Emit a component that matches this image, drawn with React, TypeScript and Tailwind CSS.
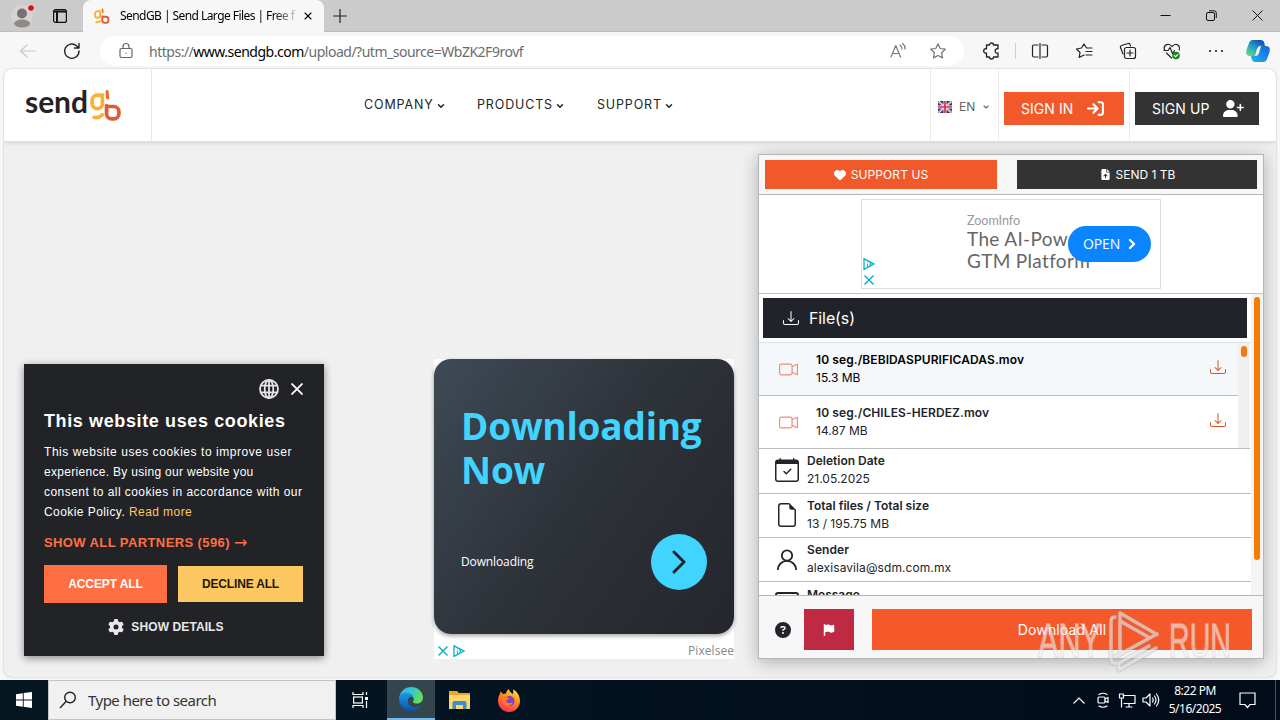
import type { ReactNode } from "react"
import { BsCalendarCheck, BsCameraVideo, BsDownload, BsFileEarmark } from "react-icons/bs"
import { FaArrowRightToBracket, FaCircleQuestion, FaFileArrowUp, FaFlag, FaGear, FaHeart, FaUserPlus } from "react-icons/fa6"
import { ChevronDown, ChevronRight, X } from "lucide-react"

const files = [
  { name: "10 seg./BEBIDASPURIFICADAS.mov", size: "15.3 MB", row: "h-[53px] bg-[#f5f8fb] text-black", spacing: "tracking-[0.090px]" },
  { name: "10 seg./CHILES-HERDEZ.mov", size: "14.87 MB", row: "h-[53px] bg-white text-[#212529]", spacing: "tracking-[0.100px]" },
]

function Line({ children, className = "" }: { children: ReactNode; className?: string }) {
  return (
    <svg viewBox="0 0 20 20" fill="none" stroke="currentColor" strokeWidth="1.2" strokeLinecap="round" strokeLinejoin="round" className={`h-5 w-5 shrink-0 ${className}`}>
      {children}
    </svg>
  )
}

function AdMarks({ vertical = false }: { vertical?: boolean }) {
  const play = (
    <svg viewBox="0 0 12 12" className="h-3 w-3" fill="none" stroke="#00aecd" strokeWidth="1.3">
      <path d="M1 .8v10.6L11.3 6z" />
      <path d="M4.400 5.500v3.500M4.400 3.300v1M6 4.500L8.400 6 6 7.500" strokeWidth="1" />
    </svg>
  )
  const close = (
    <svg viewBox="0 0 12 12" className="h-3 w-3" fill="none" stroke="#00aecd" strokeWidth="1.4">
      <path d="M1.500 1.500l9 9M10.500 1.500l-9 9" />
    </svg>
  )
  return vertical ? (
    <div className="flex flex-col gap-1">{play}{close}</div>
  ) : (
    <div className="flex gap-1">{close}{play}</div>
  )
}

function GbMark({ className = "" }: { className?: string }) {
  return (
    <svg viewBox="0 0 31 33" fill="none" strokeWidth="3.6" strokeLinecap="round" className={className}>
      <path d="M13 6H8a5 5 0 0 0-5 5v3a5 5 0 0 0 10 0V6z" stroke="#fbb034" />
      <path d="M5 27.500c3.500 1 6-.5 8-2.500" stroke="#fbb034" />
      <path d="M17.500 2.500l.5 6" stroke="#f0682f" strokeWidth="3" />
      <path d="M17 16v8a5 5 0 0 0 5 5h2a5 5 0 0 0 5-5v-2a5 5 0 0 0-5-5h-7" stroke="#e35a36" />
    </svg>
  )
}

function TabStrip() {
  return (
    <div className="flex h-8 shrink-0 items-stretch bg-[#cbcbcb]">
      <div className="flex w-[83px] items-center border-b border-[#bdbdbd]">
        <svg viewBox="0 0 28 28" className="ml-2 h-7 w-7">
          <circle cx="14" cy="14" r="11" fill="#d6d3d2" />
          <circle cx="14" cy="11.500" r="5" fill="#77726f" />
          <ellipse cx="14" cy="21.500" rx="8" ry="4" fill="#8f8a87" />
          <circle cx="23" cy="6" r="4" fill="#d6d3d2" />
          <circle cx="23" cy="6" r="2.800" fill="#e00b1c" />
        </svg>
        <svg viewBox="0 0 14 14" className="ml-[17px] h-3.5 w-3.5" fill="none" stroke="#111" strokeWidth="1.200">
          <rect x=".6" y=".6" width="12.800" height="12.800" rx="2" />
          <path d="M.6 2.500h12.800M4 3v10.400" strokeWidth="2" />
        </svg>
      </div>
      <div className="flex w-[241px] items-center rounded-t-lg bg-[#f7f7f7]">
        <GbMark className="ml-2.5 h-[17px] w-[17px]" />
        <div className="ml-2.5 w-[176px] whitespace-nowrap bg-gradient-to-r from-black from-85% to-gray-300 bg-clip-text text-[12px] tracking-[-0.560px] text-transparent">
          SendGB | Send Large Files | Free f
        </div>
        <X className="ml-[6px] h-3 w-3 text-black" strokeWidth={2.200} />
      </div>
      <div className="flex flex-1 items-center border-b border-[#bdbdbd]">
        <svg viewBox="0 0 14 14" className="ml-[9px] h-3.5 w-3.5" stroke="#222" strokeWidth="1.200">
          <path d="M7 0v14M0 7h14" />
        </svg>
        <div className="ml-auto mr-[17px] flex items-center gap-[35px]">
          <svg viewBox="0 0 11 11" className="h-[11px] w-[11px]" stroke="#111"><path d="M.5 5.500h10" /></svg>
          <svg viewBox="0 0 11 11" className="h-[11px] w-[11px]" fill="none" stroke="#111">
            <rect x=".5" y="2.500" width="8" height="8" rx="1.500" />
            <path d="M3 .8h5a2.300 2.300 0 0 1 2.300 2.300V8" />
          </svg>
          <svg viewBox="0 0 11 11" className="h-[11px] w-[11px]" stroke="#111"><path d="M.5.5l10 10M10.500.5l-10 10" /></svg>
        </div>
      </div>
    </div>
  )
}

function Toolbar() {
  return (
    <div className="flex h-[37px] shrink-0 items-center bg-[#f7f7f7] pt-px text-[#222]">
      <Line className="ml-[18px] text-[#c8c8c8]"><path d="M17 10H3M9 4l-6.500 6L9 16" /></Line>
      <Line className="ml-6"><path d="M17 10a7.200 7.200 0 1 1-2.500-5.300L17 7M17 2.500V7h-4.500" strokeWidth="1.400" /></Line>
      <div className="ml-[18px] flex h-[30px] w-[864px] items-center rounded-full bg-white">
        <Line className="ml-4 text-[#666]">
          <rect x="4" y="7.500" width="12" height="9" rx="1.500" />
          <path d="M7 7V5.500a3 3 0 0 1 6 0V7M10 12v.2" />
        </Line>
        <div className="ml-[13px] whitespace-nowrap text-[14px] tracking-[-0.490px] text-[#6c6c6c]">
          https://<span className="text-black">www.sendgb.com</span>/upload/?utm_source=WbZK2F9rovf
        </div>
        <div className="ml-auto mr-4 flex gap-5 text-[#777]">
          <Line><path d="M3 16L7.800 4.500 12.500 16M4.600 12.500h6.300M12 4c1.500 1 2 2.300 2 4M14.500 2.500c2 1.500 2.700 3.500 2.700 5.500" /></Line>
          <Line><path d="M10 2.800l2.200 4.700 5.100.7-3.700 3.600.9 5.100L10 14.500l-4.500 2.400.9-5.100L2.700 8.200l5.100-.7z" /></Line>
        </div>
      </div>
      <div className="ml-[18px] flex items-center text-[#222]">
        <Line><path d="M7.500 4a2 2 0 0 1 4 0H16v3.800a2.200 2.200 0 1 0 0 4.200v4h-4.500a2 2 0 0 1-4 0H4.500v-4a2.200 2.200 0 1 1 0-4.200V4z" strokeWidth="1.300" /></Line>
        <span className="ml-[13px] h-4 w-px bg-[#cfcfcf]" />
        <Line className="ml-[14px]"><path d="M8 4H4a1.500 1.500 0 0 0-1.500 1.500v9A1.500 1.500 0 0 0 4 16h4M12 4h4a1.500 1.500 0 0 1 1.500 1.500v9A1.500 1.500 0 0 1 16 16h-4M10 2.500v15" /></Line>
        <Line className="ml-6"><path d="M18 7h-5.500L10 3 7.500 7 2.500 8l3.500 3.500-.8 5L10 14M12 10.500h6M12 14h6" /></Line>
        <Line className="ml-6">
          <path d="M5 13L2.500 6.500a1.500 1.500 0 0 1 1-2L10 2.500a1.500 1.500 0 0 1 2 1l.5 1.500" />
          <rect x="6.500" y="6.500" width="11" height="11" rx="2" />
          <path d="M12 9v6M9 12h6" />
        </Line>
        <Line className="ml-6">
          <path d="M2.500 9C1 5 4.500 3 7 3.500c1.500.3 2.500 1.500 3 2 .5-.5 1.500-1.700 3-2 2.800-.5 5.500 2 4.300 5.500M2 9.500h4l2-3 2.500 6 2-3M4.500 12l5 5" />
          <circle cx="14" cy="14.500" r="3.800" fill="#16801d" stroke="none" />
          <path d="M12.300 14.500l1.300 1.300 2.300-2.400" stroke="white" />
        </Line>
        <Line className="ml-6"><path d="M4 10h.01M10 10h.01M16 10h.01" strokeWidth="2.200" /></Line>
        <svg viewBox="0 0 26 24" className="ml-[19px] h-6 w-[26px]">
          <defs>
            <linearGradient id="pilotA" x1="0" y1="1" x2=".7" y2="0"><stop stopColor="#7ce06a" /><stop offset=".5" stopColor="#28a7c4" /><stop offset="1" stopColor="#1550b8" /></linearGradient>
            <linearGradient id="pilotB" x1="0" y1="1" x2="1" y2="0"><stop stopColor="#22b4f5" /><stop offset="1" stopColor="#1463dc" /></linearGradient>
          </defs>
          <path d="M8 1h8q2.500 0 3.300 3l.7 3h-5q-2 0-3 3l-2 7H5q-5 0-3.500-6L4 4q1-3 4-3z" fill="url(#pilotA)" />
          <path d="M18 23h-8q-2.500 0-3.300-3L6 17h5q2 0 3-3l2-7h5q5 0 3.500 6L22 20q-1 3-4 3z" fill="url(#pilotB)" />
        </svg>
      </div>
    </div>
  )
}

function NavItem({ label, className }: { label: string; className: string }) {
  return (
    <div className={`flex items-center text-[12.5px] text-[#212529] ${className}`}>
      {label}
      <ChevronDown className="ml-[2px] h-2.5 w-2.5" strokeWidth={3.600} />
    </div>
  )
}

function SiteHeader() {
  return (
    <header className="relative flex h-[73px] shrink-0 border-b border-[#dedede] bg-white font-['Inter',sans-serif] shadow-[0_1px_4px_rgba(0,0,0,0.12)]">
      <div className="flex w-[148px] border-r border-[#e6e6e6] pl-[21px] pt-[17px]">
        <span className="w-[63px] font-['Lato',sans-serif] text-[30px] font-bold leading-[30px] tracking-[-0.050px] text-[#262223]">send</span>
        <GbMark className="mt-[3px] h-[34px] w-[34px]" />
      </div>
      <nav className="flex h-[73px] flex-1 items-center pl-[212px]">
        <NavItem label="COMPANY" className="w-[113px] tracking-[0.850px]" />
        <NavItem label="PRODUCTS" className="w-[120px] tracking-[0.850px]" />
        <NavItem label="SUPPORT" className="tracking-[0.850px]" />
      </nav>
      <div className="flex w-[68px] items-center border-l border-[#ececec] pl-[7px] pt-1 text-[12px] text-[#666]">
        <svg viewBox="0 0 14 12" className="h-3 w-3.5">
          <path fill="#31317d" d="M0 0h14v12H0z" />
          <path d="M0 0l14 12M14 0L0 12" stroke="#fff" strokeWidth="2" />
          <path d="M0 0l14 12M14 0L0 12" stroke="#d42a45" strokeWidth=".7" />
          <path d="M7 0v12M0 6h14" stroke="#fff" strokeWidth="3" />
          <path d="M7 0v12M0 6h14" stroke="#d42a45" strokeWidth="1.700" />
        </svg>
        <span className="ml-[7px]">EN</span>
        <ChevronDown className="ml-[7px] h-2 w-2" strokeWidth={3.500} />
      </div>
      <div className="flex w-[132px] border-x border-[#ececec] pl-[5px] pt-[23px]">
        <button className="flex h-[33px] w-[120px] items-center bg-[#f2592a] pl-[17px] text-[14px] tracking-[0.050px] text-white">
          SIGN IN <FaArrowRightToBracket className="ml-[14px] h-[17px] w-[17px]" />
        </button>
      </div>
      <div className="w-[146px] pl-[5px] pt-[23px]">
        <button className="flex h-[33px] w-[124px] items-center bg-[#333] pl-[17px] text-[14px] tracking-[0.050px] text-white">
          SIGN UP <FaUserPlus className="ml-[14px] h-[17px] w-[21px]" />
        </button>
      </div>
    </header>
  )
}

function CookieBanner() {
  return (
    <div className="absolute left-5 top-[295px] h-[292px] w-[300px] bg-[#212327] px-5 font-['Liberation_Sans',Arial,sans-serif] text-white shadow-[0_2px_8px_rgba(0,0,0,0.45)]">
      <div className="flex items-center justify-end gap-3 pr-[1px] pt-[15px]">
        <svg viewBox="0 0 20 20" className="h-5 w-5" fill="none" stroke="#e5e5e5" strokeWidth="1.800">
          <circle cx="10" cy="10" r="9" />
          <ellipse cx="10" cy="10" rx="4.300" ry="9" />
          <path d="M1.800 6.700h16.400M1.800 13.300h16.400M10 1v18" />
        </svg>
        <svg viewBox="0 0 12 12" className="h-3 w-3" stroke="#fff" strokeWidth="1.800"><path d="M.5.5l11 11M11.500.5l-11 11" /></svg>
      </div>
      <h2 className="mt-[11px] whitespace-nowrap text-[18px] font-bold leading-[22px] tracking-[0.620px]">This website uses cookies</h2>
      <p className="mt-[10px] whitespace-nowrap text-[12px] leading-5">
        <span className="tracking-[0.550px]">This website uses cookies to improve user</span><br />
        <span className="tracking-[0.300px]">experience. By using our website you</span><br />
        <span className="tracking-[0.450px]">consent to all cookies in accordance with our</span><br />
        <span className="tracking-[0.430px]">Cookie Policy. <span className="text-[#fdc861]">Read more</span></span>
      </p>
      <div className="mt-[11px] flex whitespace-nowrap text-[13px] font-bold leading-5 tracking-[0.400px] text-[#ff6f43]">
        SHOW ALL PARTNERS (596) <span className="ml-1 font-['DejaVu_Sans'] text-[16px] font-normal">→</span>
      </div>
      <div className="mt-3 flex items-center justify-between pr-[1px] text-[12px] font-bold">
        <button className="h-[38px] w-[123px] bg-[#ff6f43] tracking-[-0.100px]">ACCEPT ALL</button>
        <button className="h-9 w-[125px] bg-[#fdc861] tracking-[-0.180px] text-[#24180a]">DECLINE ALL</button>
      </div>
      <div className="mt-[15px] flex items-center justify-center gap-[7px] pr-4 text-[12px] font-bold tracking-[0.100px] text-[#e8e8e8]">
        <FaGear className="h-4 w-4" />SHOW DETAILS
      </div>
    </div>
  )
}

function DownloadAd() {
  return (
    <div className="ml-[430px] mt-[217px] h-[300px] w-[300px] shrink-0 bg-white font-['Open_Sans',sans-serif]">
      <div className="h-[275px] rounded-[17px] bg-[linear-gradient(125deg,#3e4a55_0%,#2d3138_52%,#24262c_100%)] px-[27px] pt-[45px] shadow-[0_2px_4px_rgba(0,0,0,0.35)]">
        <div className="whitespace-nowrap text-[37px] font-bold tracking-[-0.200px] text-[#40d4ff]">
          <div className="h-11 leading-[44px]">Downloading</div>
          <div className="h-11 leading-[44px]">Now</div>
        </div>
        <div className="mt-[42px] flex items-center justify-between">
          <span className="text-[12px] tracking-[-0.120px] text-white">Downloading</span>
          <span className="flex h-14 w-14 items-center justify-center rounded-full bg-[#40d4ff]">
            <svg viewBox="0 0 14 24" className="h-6 w-3.5" fill="none" stroke="#20252d" strokeWidth="3" strokeLinecap="round" strokeLinejoin="round">
              <path d="M2 2l10 10L2 22" />
            </svg>
          </span>
        </div>
      </div>
      <div className="flex h-[25px] items-center justify-between pl-[3px] pt-2">
        <AdMarks />
        <span className="text-[12px] tracking-[0.050px] text-[#888]">Pixelsee</span>
      </div>
    </div>
  )
}

function InfoRow({ icon, label, value, className }: { icon: ReactNode; label: string; value?: string; className: string }) {
  return (
    <div className={`flex shrink-0 border-b border-[#b9bdc0] pl-4 text-[12px] leading-[18px] text-[#212529] ${className}`}>
      <div className="flex w-6 items-center justify-center">{icon}</div>
      <div className="ml-2 pt-[3px]">
        <div className="font-semibold">{label}</div>
        {value && <div>{value}</div>}
      </div>
    </div>
  )
}

function TransferPanel() {
  return (
    <div className="ml-6 mt-3 flex h-[505px] w-[506px] shrink-0 flex-col border border-[#b3b7ba] bg-white shadow-[0_3px_16px_rgba(0,0,0,0.28)]">
      <div className="flex h-10 shrink-0 gap-5 border-b border-[#b3b7ba] bg-[#f7f7f7] px-1.5 pt-[5px] text-[12px] text-white">
        <button className="flex h-[29px] w-[232px] items-center justify-center gap-[5px] bg-[#f2592a] tracking-[0.100px]"><FaHeart className="h-3 w-3" />SUPPORT US</button>
        <button className="flex h-[29px] w-[240px] items-center justify-center gap-[6px] bg-[#333] pl-[2px]"><FaFileArrowUp className="h-[11px] w-[9px]" />SEND 1 TB</button>
      </div>
      <div className="h-[99px] shrink-0 border-b border-[#b9c4cc] pl-[102px] pt-1">
        <div className="relative h-[90px] w-[300px] border border-[#dedede] font-['Lato',sans-serif]">
          <div className="absolute bottom-[2px] left-[1px]"><AdMarks vertical /></div>
          <div className="ml-[105px] whitespace-nowrap pt-3">
            <div className="pt-px text-[12.500px] leading-4 text-[#9a9a9a]">ZoomInfo</div>
            <div className="-mt-px text-[19px] leading-[22px] tracking-[0.330px] text-[#666]">The AI-Powered<br />GTM Platform</div>
          </div>
          <button className="absolute left-[206px] top-[26px] flex h-9 w-[83px] items-center rounded-full bg-[#0a84ff] pb-px pl-[15px] font-['Open_Sans',sans-serif] text-[14px] tracking-[-0.100px] text-white">
            OPEN <ChevronRight className="ml-1 h-4 w-4" strokeWidth={3.500} />
          </button>
        </div>
      </div>
      <div className="flex h-[301px] shrink-0 overflow-hidden">
        <div className="flex w-[492px] flex-col">
          <div className="ml-1 mt-1 flex h-10 w-[484px] shrink-0 items-center bg-[#20242a] pl-5 text-[16px] tracking-[-0.100px] text-white">
            <BsDownload className="mr-[10px] h-4 w-4" />File(s)
          </div>
          <div className="mt-1 flex shrink-0 border-t border-[#dfe2e5]">
            <div className="w-[479px]">
              {files.map((file) => (
                <div key={file.name} className={`flex items-center border-b border-[#b9bdc0] pl-5 text-[12px] leading-[18px] ${file.row}`}>
                  <BsCameraVideo className="h-[19px] w-[19px] text-[#f28c78]" />
                  <div className="ml-[18px] -mt-px flex-1">
                    <div className={`font-semibold ${file.spacing}`}>{file.name}</div>
                    <div>{file.size}</div>
                  </div>
                  <BsDownload className="mr-3 mb-1 h-4 w-4 text-[#d9532c]" />
                </div>
              ))}
            </div>
            <div className="flex w-3 justify-center border-b border-[#b9bdc0] bg-[#f0f0f0] pt-[3px]">
              <span className="h-[11px] w-1.5 rounded-full bg-[#f57c0a]" />
            </div>
          </div>
          <InfoRow className="h-[45px]" icon={<BsCalendarCheck className="mb-[3px] h-6 w-6" />} label="Deletion Date" value="21.05.2025" />
          <InfoRow className="h-11" icon={<BsFileEarmark className="mb-px h-6 w-6" />} label="Total files / Total size" value="13 / 195.75 MB" />
          <InfoRow
            className="h-11 tracking-[0.080px]"
            icon={
              <svg viewBox="0 0 24 24" className="h-6 w-6" fill="none" stroke="currentColor" strokeWidth="1.800">
                <circle cx="12" cy="7.500" r="5.200" />
                <path d="M2.800 22a9.200 9.200 0 0 1 18.400 0" />
              </svg>
            }
            label="Sender"
            value="alexisavila@sdm.com.mx"
          />
          <InfoRow
            className="h-11 pt-px"
            icon={
              <svg viewBox="0 0 24 24" className="h-6 w-6" fill="none" stroke="currentColor" strokeWidth="2">
                <rect x="1" y="1" width="22" height="18" rx="2" />
              </svg>
            }
            label="Message"
          />
        </div>
        <div className="flex w-3 justify-center bg-[#f4f4f4] pt-[3px]">
          <span className="h-[263px] w-1.5 rounded-full bg-[#f57c00]" />
        </div>
      </div>
      <div className="flex flex-1 items-center border-t border-[#b3b7ba] bg-[#f7f7f7] pl-4 pt-[6px] text-white">
        <FaCircleQuestion className="h-4 w-4 text-[#212529]" />
        <div className="-mt-px ml-[13px] flex h-[41px] w-[50px] items-center justify-center bg-[#bf2941]"><FaFlag className="h-3 w-3" /></div>
        <button className="-mt-px ml-[18px] h-[41px] w-[380px] bg-[#f5592a] text-[14px] tracking-[0.150px]">Download All</button>
      </div>
    </div>
  )
}

function Watermark() {
  return (
    <svg viewBox="0 0 200 66" className="pointer-events-none absolute left-[1035px] top-[608px] h-[66px] w-[200px]" fill="none">
      <g fill="#fff" fillOpacity=".55" stroke="#d9c9c4" strokeOpacity=".45" strokeWidth="1.800" fontFamily="Liberation Sans" fontSize="48">
        <text x="3" y="49" textLength="63" lengthAdjust="spacingAndGlyphs">ANY</text>
        <text x="134" y="49" textLength="62" lengthAdjust="spacingAndGlyphs">RUN</text>
      </g>
      <g strokeLinejoin="round" strokeLinecap="round">
        <path d="M80 9c-4 0-4 3-4 6v35c0 4 2 6 5 5M85 5l37 21.500M85 5v38M85 13l30 17M80 49l42-23M84 62l37-22M84 62v-7l30-17" stroke="#888" strokeOpacity=".3" strokeWidth="5" />
        <path d="M80 9c-4 0-4 3-4 6v35c0 4 2 6 5 5M85 5l37 21.500M85 5v38M85 13l30 17M80 49l42-23M84 62l37-22M84 62v-7l30-17" stroke="#fff" strokeOpacity=".5" strokeWidth="3.500" />
      </g>
    </svg>
  )
}

function Taskbar() {
  return (
    <div className="flex h-10 shrink-0 items-center bg-[linear-gradient(90deg,#04161f,#031220_50%,#020b19)] text-white">
      <div className="flex w-12 justify-center">
        <svg viewBox="0 0 16 16" className="h-4 w-4" fill="#fff"><path d="M0 2.200l6.800-1v6.400H0zM7.700 1.100L16 0v7.600H7.700zM0 8.400h6.800v6.400L0 13.800zM7.700 8.400H16V16l-8.300-1.200z" /></svg>
      </div>
      <div className="flex h-10 w-72 items-center border border-[#c4c4c4] bg-[#f1f1f1] text-[#333]">
        <svg viewBox="0 0 18 18" className="ml-[10px] h-[18px] w-[18px]" fill="none" stroke="#222" strokeWidth="1.400"><circle cx="11" cy="6.500" r="5.300" /><path d="M7 10.500L1 17" /></svg>
        <span className="ml-[11px] text-[15px] tracking-[-0.520px]">Type here to search</span>
      </div>
      <div className="flex w-[49px] justify-center">
        <svg viewBox="0 0 17 16" className="h-4 w-[17px]" fill="none" stroke="#fff" strokeWidth="1.200">
          <path d="M1 0v2.500h10V0M1 16v-2.500h10V16M14.500 0v3M14.500 9v7" />
          <rect x="1.600" y="5" width="8.800" height="6" />
          <path d="M13 5h3v3h-3z" fill="#fff" stroke="none" />
        </svg>
      </div>
      <div className="ml-[2px] flex h-10 w-12 items-center justify-center border-b-2 border-[#76b9ed] bg-[#33464e]">
        <svg viewBox="0 0 24 24" className="h-6 w-6">
          <defs>
            <linearGradient id="edgeTop" x1="0" y1="0" x2="1" y2=".5"><stop stopColor="#2fb5e6" /><stop offset=".5" stopColor="#36c6cf" /><stop offset="1" stopColor="#64dd58" /></linearGradient>
            <linearGradient id="edgeBase" x1="0" y1="0" x2="0" y2="1"><stop stopColor="#1b9be8" /><stop offset="1" stopColor="#0c52ad" /></linearGradient>
          </defs>
          <path d="M.2 11C1 4.500 6 0 12 0c7 0 12 5 12 10.500 0 4-3 6-6.300 6-2.500 0-4.500-1-3.500-2.300.8-1 .8-2.200.3-3.200C12.500 7 4 5.500.2 11z" fill="url(#edgeTop)" />
          <path d="M0 12c0-5 5-7 8.500-6.500 3.500.5 6 3 6 5.500-1-1.500-3-1.600-4.500-.2-2.500 2.500-1.500 8 4 9.200 3 .6 5.500-.3 7.500-1.200C19.500 22 16 24 12 24 5 24 0 18.500 0 12z" fill="url(#edgeBase)" />
        </svg>
      </div>
      <svg viewBox="0 0 21 18" className="ml-[14px] h-[18px] w-[21px]">
        <path d="M0 0h8l2 2h11v16H0z" fill="#e9a82a" />
        <path d="M0 4h21v14H0z" fill="#ffd769" />
        <path d="M3.500 18v-6a2 2 0 0 1 2-2h10a2 2 0 0 1 2 2v6h-3.500v-4H7v4z" fill="#398fd0" />
      </svg>
      <svg viewBox="0 0 24 24" className="ml-[27px] h-6 w-6">
        <defs><linearGradient id="fox" x1=".8" y1="0" x2=".3" y2="1"><stop stopColor="#ffe43e" /><stop offset=".45" stopColor="#ff8a1e" /><stop offset="1" stopColor="#f72b5b" /></linearGradient></defs>
        <path d="M1 13C1 8 3 7 3.500 3.500L6 6l3-.5C9.500 3 11 1.500 12 1c0 2.500 2 3.500 4 5 .5-1.500 0-3 0-4.500 4 2 7 6 7 11.500a11 11 0 0 1-22 0z" fill="url(#fox)" />
        <circle cx="12.500" cy="13" r="5" fill="#7643d2" />
        <path d="M5 9c3-1 5 .5 7.500 1-1 2-3 1.500-3.500 3 1 3 5 2.500 6.500 1 0 4-7 6-9.500 1z" fill="#ff7b22" />
      </svg>
      <div className="ml-auto flex items-center">
        <svg viewBox="0 0 12 7" className="h-[7px] w-3" fill="none" stroke="#fff" strokeWidth="1.200"><path d="M.5 6.500L6 1l5.500 5.500" /></svg>
        <Line className="ml-[8px]"><rect x="5" y="7" width="7" height="6" rx="1" /><path d="M12 9l3-1.500v5L12 11M6 4.500q4-2.500 8 0M6 16q4 2.500 8 0" /></Line>
        <Line className="ml-[4px]"><path d="M6 5.500h12v8H7M12 13.500V17M9 17h6M2.500 4h4v4h-4zM4.500 8v9" /></Line>
        <Line className="ml-[4px]"><path d="M2 8h3l4-4v12l-4-4H2zM11.500 8q1.500 2 0 4M13.500 6q3 4 0 8M15.500 4q4.500 6 0 12" /></Line>
        <div className="ml-[6px] w-[56px] whitespace-nowrap text-center text-[12px] leading-[18px] tracking-[-0.500px]">8:22 PM<br />5/16/2025</div>
        <svg viewBox="0 0 17 17" className="ml-[16px] mr-[19px] h-[17px] w-[17px]" fill="none" stroke="#fff" strokeWidth="1.200"><path d="M1 1h15v11.500h-5l-2.500 3-2.500-3H1z" /></svg>
        <span className="mr-1 h-10 w-px bg-[#4a525c]" />
      </div>
    </div>
  )
}

export default function App() {
  return (
    <div className="relative flex h-[720px] w-[1280px] flex-col overflow-hidden bg-[#f7f7f7] font-['Noto_Sans',sans-serif]">
      <TabStrip />
      <Toolbar />
      <main className="relative mx-1 mb-[3px] flex h-[608px] shrink-0 flex-col overflow-hidden rounded-lg bg-[#f0f0f0] font-['Inter',sans-serif] shadow-[0_0_2px_rgba(0,0,0,0.300)]">
        <SiteHeader />
        <div className="flex flex-1">
          <DownloadAd />
          <TransferPanel />
        </div>
        <CookieBanner />
      </main>
      <Taskbar />
      <Watermark />
    </div>
  )
}
